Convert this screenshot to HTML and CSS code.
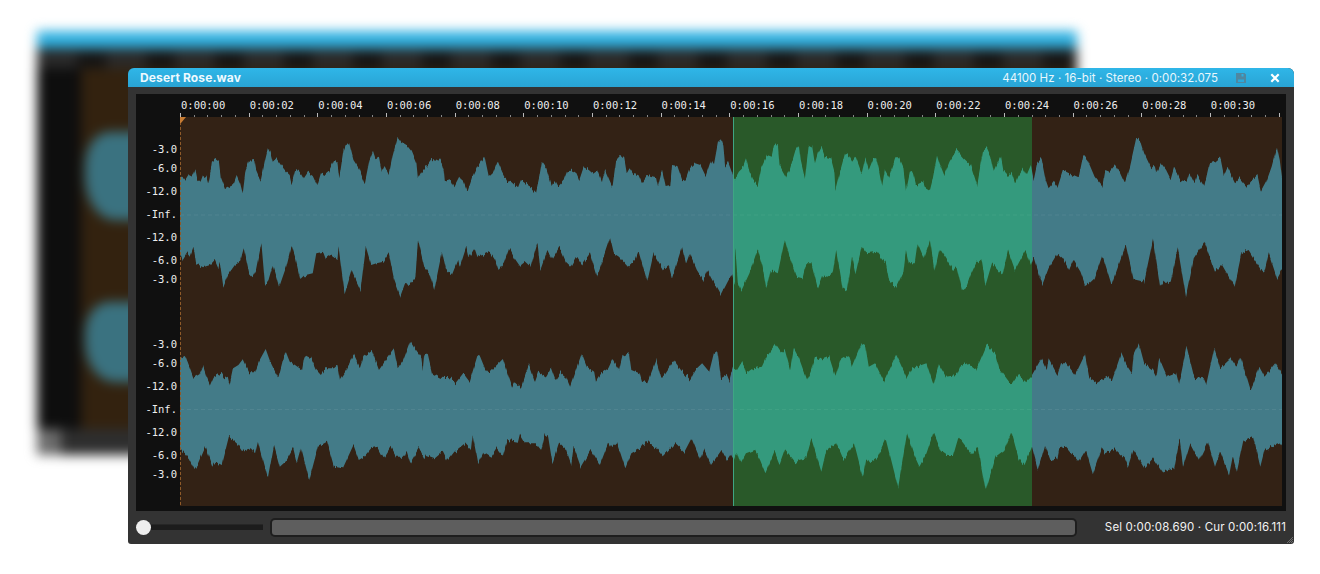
FILE: index.html
```html
<!DOCTYPE html>
<html lang="en">
<head>
<meta charset="utf-8">
<title>Desert Rose.wav</title>
<link rel="stylesheet" href="styles.css">
</head>
<body>
<div class="backdrop">
  <div class="bd-title"></div>
  <div class="bd-band"></div>
  <div class="bd-ruler"></div>
  <div class="bd-main">
    <div class="bd-gutter"></div>
    <div class="bd-wave">
      <div class="bd-blob bd-blob-a"></div>
      <div class="bd-blob bd-blob-b"></div>
    </div>
  </div>
  <div class="bd-foot"><div class="bd-knob"></div></div>
</div>
<main class="window">
  <header class="titlebar">
    <span class="title">Desert Rose.wav</span>
    <span class="info">44100 Hz · 16-bit · Stereo · 0:00:32.075</span>
    <svg class="save" viewBox="0 0 12 12" aria-hidden="true"><path d="M1 1h8.500L11 2.500V11H1z M6.500 2V4.500h2V2z M3 7.500v2.500h6V7.500z" fill-rule="evenodd"/></svg>
    <svg class="close" viewBox="0 0 10 10" aria-hidden="true"><path d="M1.300 1.300l7.400 7.400M8.700 1.300L1.300 8.700"/></svg>
  </header>
  <section class="panel">
    <div class="ruler">
      <div class="labels">
        <span>0:00:00</span><span>0:00:02</span><span>0:00:04</span><span>0:00:06</span><span>0:00:08</span><span>0:00:10</span><span>0:00:12</span><span>0:00:14</span><span>0:00:16</span><span>0:00:18</span><span>0:00:20</span><span>0:00:22</span><span>0:00:24</span><span>0:00:26</span><span>0:00:28</span><span>0:00:30</span>
      </div>
      <div class="ticks"></div>
    </div>
    <div class="tracks">
      <div class="scale">
        <div class="channel"><span>-3.0</span><span>-6.0</span><span>-12.0</span><span>-Inf.</span><span>-12.0</span><span>-6.0</span><span>-3.0</span></div>
        <div class="channel"><span>-3.0</span><span>-6.0</span><span>-12.0</span><span>-Inf.</span><span>-12.0</span><span>-6.0</span><span>-3.0</span></div>
      </div>
      <svg class="wave" viewBox="180 117 1102 389" width="1102" height="389" aria-hidden="true">
        <defs>
          <filter id="rough" x="0" y="0" width="1" height="1" filterUnits="objectBoundingBox" color-interpolation-filters="sRGB">
            <feTurbulence type="fractalNoise" baseFrequency=".55 .03" numOctaves="2" seed="4"/>
            <feColorMatrix type="matrix" values="0 0 0 0 .5  1 0 0 0 0  0 0 0 0 0  0 0 0 0 1" result="n"/>
            <feDisplacementMap in="SourceGraphic" in2="n" scale="7" xChannelSelector="R" yChannelSelector="G"/>
          </filter>
        </defs>
        <rect class="bg" x="180" y="117" width="1102" height="389"/>
        <g class="rough">
        <rect x="180" y="117" width="1102" height="389" fill="none"/>
        <g transform="translate(180 130) scale(.354 .3333)">
          <polygon class="w" points="0,260 0,150 8,143 15,152 25,135 35,140 43,118 48,145 58,155 65,135 75,140 80,160 85,135 90,95 100,87 110,95 115,140 128,177 140,170 150,165 160,135 170,160 177,190 185,120 195,92 210,90 215,120 228,152 240,90 248,55 256,70 262,95 272,85 285,105 300,125 310,135 315,160 325,120 335,122 342,130 350,145 362,125 375,135 388,165 398,130 410,135 420,125 435,90 445,100 450,145 462,60 468,42 478,40 490,90 505,115 522,160 535,90 545,62 552,85 562,80 570,125 578,108 590,135 600,80 615,20 625,35 640,45 655,65 668,100 672,145 682,125 700,105 710,90 725,92 735,85 745,120 748,155 765,150 775,172 790,140 800,150 812,185 825,145 840,110 860,78 872,138 885,125 897,92 910,125 925,155 935,152 955,172 963,150 975,160 990,170 1005,190 1015,140 1022,95 1035,115 1050,168 1058,150 1068,170 1085,150 1095,123 1110,122 1120,130 1128,150 1140,112 1155,120 1165,130 1178,120 1192,160 1200,118 1222,172 1232,90 1245,75 1255,85 1262,130 1270,115 1280,132 1295,135 1305,160 1320,138 1345,145 1350,170 1362,120 1372,168 1385,165 1390,105 1405,108 1418,148 1430,145 1440,115 1455,100 1470,105 1485,138 1500,90 1508,105 1520,35 1528,28 1535,50 1540,110 1548,95 1560,130 1568,170 1568,260"/>
          <polygon class="w" points="0,250 0,370 8,390 20,370 28,380 38,350 45,400 65,412 85,405 98,390 108,415 112,395 122,470 135,435 155,405 170,395 180,355 195,430 205,442 215,420 230,340 240,465 250,450 262,405 272,440 280,472 300,410 315,345 325,380 340,450 355,435 375,430 385,370 405,365 412,385 425,375 445,390 448,352 465,490 485,420 495,445 510,480 525,350 540,405 555,400 575,395 590,370 605,450 622,500 635,462 650,465 665,445 672,330 690,410 705,430 718,480 740,365 752,420 768,435 785,390 790,410 808,350 815,385 832,355 840,380 855,375 875,365 890,390 900,420 915,400 930,355 945,385 960,408 975,395 990,410 1010,335 1018,420 1038,360 1050,390 1072,350 1090,395 1105,410 1120,380 1135,405 1158,370 1178,440 1190,405 1215,325 1225,370 1240,380 1265,410 1285,390 1295,360 1320,455 1338,370 1365,420 1380,405 1390,445 1418,350 1430,400 1440,370 1460,420 1478,450 1490,420 1505,450 1528,495 1545,460 1560,430 1568,470 1568,250"/>
        </g>
        <g transform="translate(730 130) scale(.354 .3333)">
          <polygon class="w" points="0,260 0,120 8,140 15,145 25,125 35,115 45,85 55,125 65,150 78,165 88,115 105,75 118,80 125,45 135,42 140,105 158,140 170,115 185,60 195,45 200,90 212,145 222,50 232,45 240,100 248,70 258,50 268,80 285,85 295,125 298,180 312,120 325,70 335,75 345,95 355,80 372,130 382,85 392,120 405,85 413,85 420,115 430,170 438,118 450,140 467,85 478,85 490,115 497,182 508,125 515,122 525,165 545,155 550,170 565,180 572,150 585,75 592,100 605,135 620,95 640,60 660,85 680,105 698,165 715,60 725,52 735,75 745,125 765,78 772,120 785,135 795,125 806,160 815,135 828,115 838,135 850,105 858,150 868,100 880,85 892,150 900,175 915,155 925,170 940,120 955,128 970,135 985,142 998,75 1010,90 1030,140 1052,170 1060,120 1072,125 1088,105 1100,125 1115,160 1130,110 1148,25 1160,35 1170,70 1190,115 1200,105 1205,130 1218,100 1232,120 1245,148 1255,110 1272,150 1290,155 1298,130 1312,160 1320,135 1340,170 1355,100 1370,95 1385,82 1395,135 1405,110 1428,160 1440,145 1460,170 1475,150 1490,135 1500,185 1515,155 1530,110 1545,50 1553,90 1560,150 1568,170 1568,260"/>
          <polygon class="w" points="0,250 0,440 8,410 15,355 22,455 32,482 55,430 78,358 92,410 103,478 115,420 135,430 155,328 170,385 188,440 205,445 215,400 230,400 248,475 262,435 275,440 290,430 300,360 318,475 330,482 345,380 355,430 372,350 385,370 415,365 440,400 450,455 470,470 490,425 497,360 505,400 522,400 530,340 548,385 565,330 578,425 592,355 610,385 630,420 640,410 655,480 668,470 680,435 695,400 710,385 722,465 740,400 760,425 770,435 785,360 805,420 835,360 850,405 858,380 882,465 900,415 925,370 940,385 958,420 970,390 990,425 1005,470 1030,445 1052,375 1078,465 1118,345 1140,448 1170,455 1195,328 1215,470 1225,455 1245,455 1265,355 1288,500 1310,385 1340,335 1370,425 1390,405 1425,470 1445,370 1465,360 1500,420 1510,425 1522,370 1545,445 1568,400 1568,250"/>
        </g>
        <g transform="translate(180 335) scale(.354 .3333)">
          <polygon class="w" points="0,228 0,70 15,62 25,90 38,128 55,118 65,92 75,125 85,150 95,125 115,113 125,130 135,125 140,150 150,100 165,90 178,72 195,112 212,112 225,75 242,42 255,80 278,130 298,48 310,80 325,90 345,105 352,60 370,70 385,105 398,120 410,100 435,100 445,90 452,135 470,105 490,58 508,100 518,65 542,48 562,105 585,70 605,42 615,100 630,75 650,18 665,45 682,70 686,105 690,58 700,60 712,115 735,128 765,130 778,145 800,115 818,140 840,62 848,65 862,102 872,115 890,95 912,72 925,115 938,155 945,142 963,158 985,88 1002,140 1012,110 1035,125 1048,100 1060,135 1075,112 1090,125 1102,155 1135,55 1150,95 1170,110 1175,140 1190,115 1210,100 1222,72 1240,105 1250,60 1268,52 1275,105 1298,115 1305,140 1320,145 1345,75 1360,132 1395,75 1415,105 1442,135 1455,105 1475,85 1495,110 1508,55 1518,48 1528,130 1545,120 1555,145 1568,120 1568,228"/>
          <polygon class="w" points="0,216 0,340 10,350 25,370 40,402 50,390 72,335 92,395 100,380 118,390 138,305 160,325 175,348 200,340 212,355 220,318 248,430 265,330 282,395 300,378 320,340 330,385 342,340 365,435 390,335 415,320 435,395 460,400 490,330 505,375 520,365 540,340 558,335 575,370 595,335 610,365 635,365 640,350 650,385 675,338 690,370 695,360 720,370 742,350 755,378 775,350 805,325 822,345 827,298 842,385 858,350 880,365 895,340 912,362 925,315 955,320 960,298 975,325 1005,325 1020,345 1030,298 1040,305 1052,385 1070,325 1090,345 1105,390 1112,335 1132,395 1160,345 1185,390 1210,320 1220,340 1235,325 1258,400 1275,355 1300,340 1318,315 1345,340 1365,365 1400,325 1425,350 1445,310 1470,375 1480,345 1500,390 1530,345 1545,375 1560,350 1568,375 1568,216"/>
        </g>
        <g transform="translate(730 335) scale(.354 .3333)">
          <polygon class="w" points="0,228 0,125 8,95 20,105 35,78 45,115 65,100 90,95 105,60 128,28 145,55 155,45 170,105 180,40 195,70 217,135 228,110 240,65 255,75 280,65 298,125 312,75 335,60 345,95 372,25 382,30 392,95 410,85 435,140 470,60 500,130 515,100 555,85 575,150 590,88 610,125 640,120 650,95 670,85 695,105 725,30 750,60 760,100 795,150 815,118 835,140 853,120 880,70 895,105 900,70 925,120 935,85 950,85 975,120 1003,58 1015,130 1035,145 1065,125 1078,140 1105,55 1120,90 1135,115 1140,60 1155,25 1170,85 1195,105 1205,125 1212,68 1235,125 1260,115 1268,150 1290,35 1312,130 1335,125 1345,150 1368,38 1385,100 1415,70 1430,95 1442,65 1470,165 1480,140 1495,95 1510,125 1540,85 1568,130 1568,228"/>
          <polygon class="w" points="0,216 0,350 10,370 20,350 30,385 45,355 70,345 85,375 100,415 125,350 140,390 155,345 185,385 195,375 215,370 230,312 258,410 272,345 300,325 320,375 350,325 375,428 385,370 395,385 415,370 440,310 475,458 500,295 520,360 535,395 555,355 575,292 595,345 615,360 630,360 645,305 685,360 700,335 722,468 750,365 775,345 795,290 815,370 832,390 853,335 870,405 890,330 905,375 925,370 930,340 950,335 985,380 1005,345 1025,418 1050,340 1060,355 1085,340 1115,370 1125,395 1140,345 1170,400 1195,370 1220,410 1255,400 1270,310 1280,395 1300,325 1325,375 1350,320 1370,395 1385,350 1410,420 1420,365 1432,410 1450,320 1478,305 1498,395 1510,345 1530,335 1555,325 1568,345 1568,216"/>
        </g>
        </g>
        <line class="inf" x1="180" y1="215" x2="1282" y2="215"/>
        <line class="inf" x1="180" y1="409.500" x2="1282" y2="409.500"/>
        <rect class="sel" x="733" y="117" width="299" height="389"/>
        <line class="sel-edge" x1="733.500" y1="117" x2="733.500" y2="506"/>
        <line class="cursor" x1="180.500" y1="117" x2="180.500" y2="506"/>
        <polygon class="cursor-head" points="180,117 186,117 181,123 180,123"/>
      </svg>
    </div>
  </section>
  <footer class="footer">
    <div class="zoom"><div class="knob"></div></div>
    <div class="scroll"><div class="thumb"></div></div>
    <span class="status">Sel 0:00:08.690 · Cur 0:00:16.111</span>
    <svg class="grip" viewBox="0 0 6 6" aria-hidden="true"><path d="M0 6L6 0M2 6L6 2M4 6L6 4"/></svg>
  </footer>
</main>
</body>
</html>
```
FILE: styles.css
```css
html, body { margin: 0; height: 100%; }
body {
  background: #fff;
  overflow: hidden;
  padding: 68px 0 0 128px;
  box-sizing: border-box;
  font-family: Inter, "Liberation Sans", sans-serif;
}

/* blurred window behind */
.backdrop {
  position: absolute;
  left: 37px;
  top: 31px;
  width: 1040px;
  height: 424px;
  display: flex;
  flex-direction: column;
  background: #2f2f2f;
  filter: blur(6px);
}
.bd-title { height: 17px; background: #2fb0e0; flex: none; }
.bd-band { height: 5px; background: #2c2c2c; flex: none; }
.bd-ruler {
  height: 15px;
  flex: none;
  background: repeating-linear-gradient(90deg, #2a2a2a 0 40px, #141414 40px 69px);
}
.bd-main { flex: 1; display: flex; background: #111; }
.bd-gutter { width: 44px; background: #0e0e0e; flex: none; }
.bd-wave { flex: 1; background: #33220f; position: relative; }
.bd-blob {
  position: absolute;
  left: 4px;
  width: 60px;
  background: #3a7280;
  border-radius: 40% 0 0 50%;
}
.bd-blob-a { top: 64px; height: 88px; }
.bd-blob-b { top: 234px; height: 80px; }
.bd-foot { height: 26px; background: #2e2e2e; flex: none; }
.bd-knob { width: 24px; height: 26px; background: #6c6c6c; }

.window {
  width: 1166px;
  height: 476px;
  background: #333;
  border-radius: 6px 6px 3px 3px;
  display: flex;
  flex-direction: column;
  position: relative;
  overflow: hidden;
}

.titlebar {
  height: 19px;
  flex: none;
  background: linear-gradient(#2fb6e8, #29a4d4);
  display: flex;
  align-items: center;
  padding: 0 14px 0 12px;
  color: #e8f7fd;
}
.title { font-size: 12px; font-weight: 700; letter-spacing: .13px; color: #eefaff; flex: 1; }
.info { font-size: 11.500px; letter-spacing: .06px; }
.save { width: 12px; height: 12px; margin-left: 17px; fill: #4f87a0; }
.close { width: 10px; height: 10px; margin-left: 23px; fill: none; stroke: #fff; stroke-width: 2.200; }

.panel {
  margin: 7px 8px 0;
  height: 417px;
  background: #101010;
  flex: none;
  display: flex;
  flex-direction: column;
}
.ruler { height: 23px; flex: none; padding-left: 44px; position: relative; display: flex; flex-direction: column; }
.labels {
  display: flex;
  flex: 1;
  align-items: center;
  padding: 3px 0 0 1px;
  font: 10.500px/12px "DejaVu Sans Mono", monospace;
  color: #eee;
}
.labels span { width: 68.670px; flex: none; }
.ticks {
  height: 4px;
  flex: none;
  width: 1102px;
  background:
    repeating-linear-gradient(90deg, #bbb 0 1px, transparent 1px 68.670px) 0 0 / 100% 4px no-repeat,
    repeating-linear-gradient(90deg, #888 0 1px, transparent 1px 13.734px) 0 2px / 100% 2px no-repeat;
}

.tracks { display: flex; flex: 1; min-height: 0; }
.scale {
  width: 44px;
  flex: none;
  box-sizing: border-box;
  padding: 26px 3px 0 0;
  font: 10.500px/12px "DejaVu Sans Mono", monospace;
  color: #eee;
  text-align: right;
}
.channel {
  display: grid;
  grid-template-rows: 19px 23px 23px 23px 23px 19px 12px;
  margin-bottom: 53px;
}
.wave { display: block; flex: none; }
.bg { fill: #332215; }
.w { fill: #437b88; }
.rough { filter: url(#rough); }
.inf { stroke: rgba(255, 255, 255, .07); stroke-dasharray: 4 3; }
.sel { fill: rgba(14, 241, 95, .27); }
.sel-edge { stroke: #3ea583; }
.cursor { stroke: #8f5a28; stroke-dasharray: 3 2; }
.cursor-head { fill: #c77c33; }

.footer {
  flex: 1;
  display: flex;
  align-items: center;
  padding: 0 8px 1px 8px;
  position: relative;
}
.zoom {
  width: 127px;
  height: 6px;
  background: #1c1c1c;
  border-top: 1px solid #262626;
  box-sizing: border-box;
  position: relative;
  flex: none;
}
.knob {
  position: absolute;
  left: 0;
  top: -5px;
  width: 15px;
  height: 15px;
  border-radius: 50%;
  background: #eee;
}
.scroll {
  width: 807px;
  height: 19px;
  margin-left: 7px;
  box-sizing: border-box;
  padding: 2px;
  background: #1e1e1e;
  border-radius: 5px;
  flex: none;
}
.thumb { height: 100%; background: #5e5e5e; border-radius: 3px; }
.status { margin-left: auto; font-size: 11.500px; letter-spacing: .16px; color: #f2f2f2; white-space: nowrap; }
.grip { position: absolute; right: 1px; bottom: 1px; width: 6px; height: 6px; stroke: #888; stroke-width: .7; }
```
